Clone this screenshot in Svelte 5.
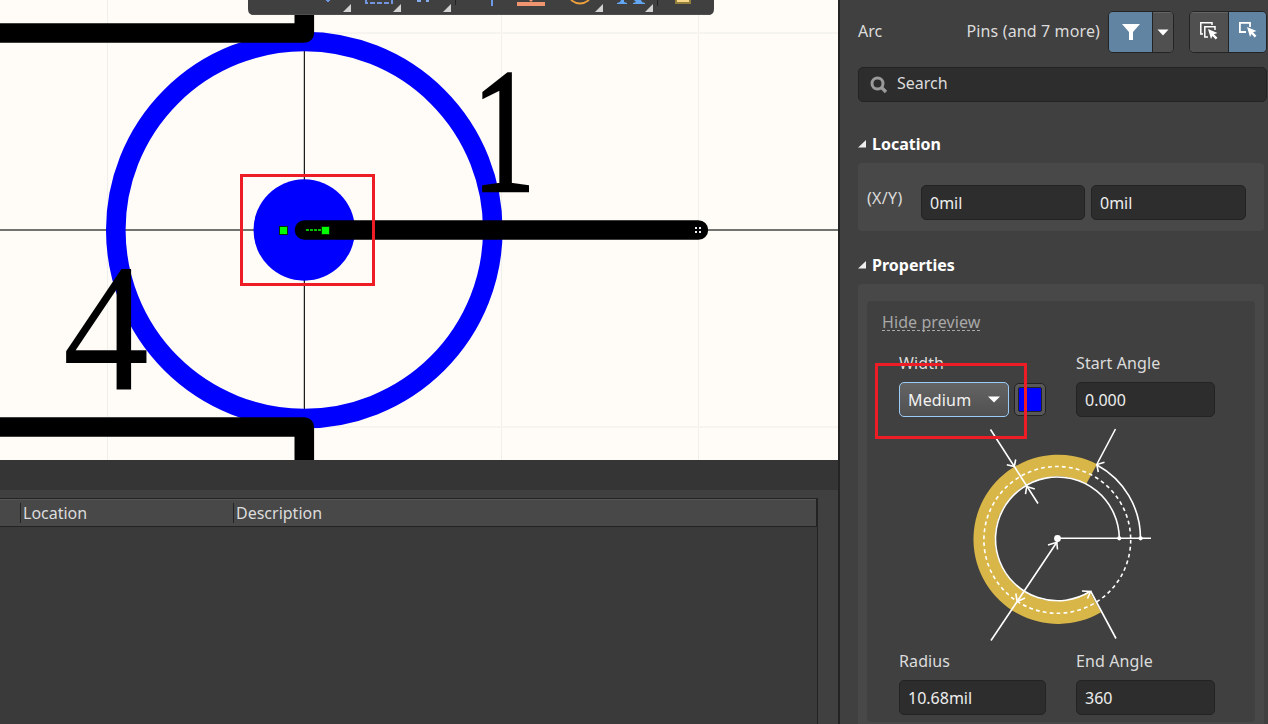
<script lang="ts">
	let search = $state('Search');
	let posX = $state('0mil');
	let posY = $state('0mil');
	let startAngle = $state('0.000');
	let endAngle = $state('360');
	let radius = $state('10.68mil');
	let showPreview = $state(true);

	const gridX = [107.5, 304.5, 501.5, 698.5];
	const gridY = [33, 230, 427];
	const menuMarks = [103, 153, 203, 355, 405];
</script>

<div class="app">
	<div class="left">
		<svg class="sheet" width="838" height="460" viewBox="0 0 838 460">
			{#each gridX as x}
				<path d="M{x} 0V460" stroke="#efefeb" />
			{/each}
			{#each gridY as y}
				<path d="M0 {y}H838" stroke="#f5f4ef" stroke-width="2" />
			{/each}
			<path d="M0 230H838" stroke="#73736f" stroke-width="2" />
			<path d="M304.5 0V460" stroke="#1c1c1c" />
			<path d="M303.5 0V460" stroke="#c8c8c3" />
			<circle cx="304.3" cy="230" r="188.5" fill="none" stroke="#00f" stroke-width="19.6" />
			<circle cx="304.2" cy="230" r="50.7" fill="#00f" />
			<path d="M-20 33H304.3V-20M-20 427H304.3V480" class="body-line" />
			<path d="M304.5 230H698.4" class="body-line" />
			<text class="pin-one" transform="translate(471.8 191) scale(.72 1)">1</text>
			<text transform="translate(62.7 389) scale(.95 1)">4</text>
			<g fill="#e8eef0">
				<path d="M695 227h2v2h-2zM699 227h2v2h-2zM695 231h2v2h-2zM699 231h2v2h-2z" />
			</g>
			<path d="M306 230H321" stroke="#00c000" stroke-width="2" stroke-dasharray="3 1" />
			<rect x="279.5" y="226.5" width="8" height="8" fill="#0f0" stroke="#003200" />
			<rect x="321.5" y="226.5" width="8" height="8" fill="#0f0" stroke="#003200" />
		</svg>

		<svg class="toolbar" width="466" height="15" viewBox="0 0 466 15">
			<path d="M0 0H466V9Q466 15 460 15H6Q0 15 0 9Z" fill="#404040" />
			<path d="M4 14.5H462" stroke="#4e4e4e" />
			<path d="M78 0h4v1h-1v1h-2v-1h-1z" fill="#6f94e0" />
			<path d="M118 0V3H144V0" fill="none" stroke="#7394df" stroke-width="2" stroke-dasharray="5 2" />
			<path d="M169 0h4v2h-4zM178 0h3v2h-3z" fill="#86aced" />
			<path d="M207.5 0V5M409.5 0V6" stroke="#222" />
			<path d="M244 0V6" stroke="#6f9ae8" stroke-width="2" />
			<path d="M269 4H297" stroke="#f0946f" stroke-width="4" />
			<path d="M281 0H285L283 2Z" fill="#f0946f" />
			<path d="M323 0Q332 7 341 0" fill="none" stroke="#eda03c" stroke-width="1.8" />
			<path d="M373 0h3v2l3 1v1h-10v-1l3-1zM386 0h7l1 2 3 1v1h-12v-1l3-1z" fill="#61a5f3" />
			<path d="M427 0h16v4h-16z" fill="#94803c" />
			<path d="M429 0h12v2h-12z" fill="#f8d987" />
			{#each menuMarks as x}
				<path d="M{x - 8} 12L{x} 4V12Z" fill="#d2d2d2" />
			{/each}
		</svg>

		<div class="strip"></div>
		<div class="list">
			<div class="list-head">
				<div class="col col-empty"></div>
				<div class="col col-location">Location</div>
				<div class="col">Description</div>
			</div>
			<div class="list-body"></div>
		</div>
		<div class="marker marker-sheet"></div>
	</div>

	<div class="panel">
		<div class="top">
			<span class="kind">Arc</span>
			<span class="filter-text">Pins (and 7 more)</span>
			<div class="group">
				<button class="btn btn-filter on" aria-label="Filter">
					<svg width="20" height="18" viewBox="0 0 20 18"><path d="M1 1H19L12 9V17H8V9Z" fill="#fff" /></svg>
				</button>
				<button class="btn btn-drop" aria-label="Filter list">
					<svg width="12" height="7" viewBox="0 0 12 7"><path d="M.5 .5H11.5L6 6.5Z" fill="#fff" /></svg>
				</button>
			</div>
			<div class="group group-select">
				<button class="btn btn-multi" aria-label="Select all">
					<svg width="20" height="20" viewBox="0 0 20 20">
						<path d="M4 13H1.8V1.8H13V4" fill="none" stroke="#fff" stroke-width="1.5" />
						<path d="M9 16H5.8V5.8H16V9" fill="none" stroke="#fff" stroke-width="1.5" />
						<path d="M9 8L18.5 12L15 13.3L18.5 16.8L16.7 18.5L13.5 15L12 18Z" fill="#fff" />
					</svg>
				</button>
				<button class="btn btn-single on" aria-label="Select one">
					<svg width="20" height="20" viewBox="0 0 20 20">
						<path d="M8 12H1.9V2.9H12V7" fill="none" stroke="#fff" stroke-width="1.8" />
						<path d="M9 7L18.5 11L15 12.3L18.5 15.8L16.7 17.5L13.5 14L12 17Z" fill="#fff" />
					</svg>
				</button>
			</div>
		</div>

		<div class="search">
			<svg width="18" height="18" viewBox="0 0 18 18">
				<circle cx="7.5" cy="7.5" r="5.5" fill="none" stroke="#9a9a9a" stroke-width="3" />
				<path d="M11.5 11.5L16 16" stroke="#9a9a9a" stroke-width="3.4" />
			</svg>
			<input bind:value={search} />
		</div>

		<div class="section">
			<svg width="8" height="8" viewBox="0 0 8 8"><path d="M0 7.5L8 0V7.5Z" fill="#eee" /></svg>
			<span>Location</span>
		</div>
		<div class="box location">
			<span class="xy">(X/Y)</span>
			<input class="field field-x" bind:value={posX} />
			<input class="field field-y" bind:value={posY} />
		</div>

		<div class="section section-props">
			<svg width="8" height="8" viewBox="0 0 8 8"><path d="M0 7.5L8 0V7.5Z" fill="#eee" /></svg>
			<span>Properties</span>
		</div>
		<div class="box props">
			<div class="inner">
				<button class="preview-link" onclick={() => (showPreview = !showPreview)}>Hide preview</button>
				<div class="grid">
					<div>
						<div class="label">Width</div>
						<div class="width-row">
							<button class="select">
								<span>Medium</span>
								<svg width="12" height="7" viewBox="0 0 12 7"><path d="M0 .5H12L6 6.5Z" fill="#fff" /></svg>
							</button>
							<button class="color" aria-label="Color"><span></span></button>
						</div>
					</div>
					<div>
						<div class="label">Start Angle</div>
						<input class="field" bind:value={startAngle} />
					</div>
				</div>
				<div class="preview">
					{#if showPreview}
						<svg width="210" height="230" viewBox="960 420 210 230" fill="none" stroke="#fff" stroke-width="1.6">
							<path d="M1097 464.2A84.6 84.6 0 1 0 1101 612.2L1089.8 592A62.4 62.4 0 1 1 1086.5 483.6Z" fill="#d9b648" stroke="none" />
							<circle cx="1057.3" cy="539.9" r="73.4" stroke-dasharray="3.8 3.2" />
							<path d="M1119.3 538.3A61.9 61.9 0 1 0 1090 591.5" />
							<path d="M1140.5 538.3A83.5 83.5 0 0 0 1097 465" />
							<path d="M1057.5 538.3H1151" />
							<path d="M990.5 429.5L1038 503.5M1115.5 429L1097 464M991 640.5L1057 542M1116 638.5L1090.5 591" />
							<path d="M1006.8 464.8L1014.3 466.5L1015.7 459.5" />
							<path d="M1025.5 494.2L1026.7 486.5L1034.8 489" />
							<path d="M1098.3 472L1096.8 464.5L1104.5 462.3" />
							<path d="M1048 545L1056.8 542.3L1057.5 549.5" />
							<path d="M1015.8 593.5L1017.2 601.5L1025 598" />
							<path d="M1082 591L1090.5 591.5L1087.5 598.5" />
							<circle cx="1057.5" cy="538.5" r="3.4" fill="#fff" stroke="none" />
							<circle cx="1119.3" cy="538.3" r="2.1" fill="#fff" stroke="none" />
							<circle cx="1140.6" cy="538.3" r="2.1" fill="#fff" stroke="none" />
						</svg>
					{/if}
				</div>
				<div class="grid grid-end">
					<div>
						<div class="label">Radius</div>
						<input class="field" bind:value={radius} />
					</div>
					<div>
						<div class="label">End Angle</div>
						<input class="field" bind:value={endAngle} />
					</div>
				</div>
			</div>
		</div>
		<div class="marker marker-width"></div>
	</div>
</div>

<style>
	:global(body) {
		overflow: hidden;
		background: #404040;
	}
	.app {
		display: flex;
		width: 1268px;
		height: 724px;
		overflow: hidden;
		font-family: "Noto Sans", "Open Sans", sans-serif;
		font-size: 16px;
		line-height: 22px;
		color: #dcdcdc;
	}
	input,
	button {
		font: inherit;
		color: inherit;
		box-sizing: border-box;
		margin: 0;
		padding: 0;
		outline: none;
	}
	svg {
		display: block;
		flex: none;
	}
	.left {
		position: relative;
		display: flex;
		flex-direction: column;
		width: 838px;
		height: 724px;
		flex: none;
	}
	.sheet {
		background: #fffcf7;
	}
	.sheet text {
		font-family: "Liberation Serif", serif;
		font-size: 182px;
		fill: #000;
	}
	.sheet .pin-one {
		font-size: 178px;
		stroke: #000;
		stroke-width: 2.5px;
	}
	.body-line {
		fill: none;
		stroke: #000;
		stroke-width: 19.6;
		stroke-linecap: round;
		stroke-linejoin: round;
	}
	.toolbar {
		position: absolute;
		left: 248px;
		top: 0;
	}
	.strip {
		height: 30px;
		background: #353535;
	}
	.list {
		flex: 1;
		display: flex;
		flex-direction: column;
		width: 818px;
		padding-top: 8px;
		box-sizing: border-box;
	}
	.list-head {
		display: flex;
		align-items: center;
		height: 29px;
		box-sizing: border-box;
		border: 1px solid #232323;
		border-left: none;
		border-right-width: 2px;
		background: #484848;
		box-shadow: inset 0 1px #555;
	}
	.col {
		height: 20px;
		line-height: 20px;
		padding-left: 2px;
		font-size: 16px;
	}
	.col + .col {
		border-left: 1px solid #232323;
	}
	.col-empty {
		width: 18px;
	}
	.col-location {
		width: 210px;
	}
	.list-body {
		flex: 1;
		background: #3a3a3a;
		border-right: 1px solid #232323;
	}
	.marker {
		position: absolute;
		box-sizing: border-box;
		border: 3px solid #ee1c25;
		pointer-events: none;
	}
	.marker-sheet {
		left: 240px;
		top: 174px;
		width: 135px;
		height: 112px;
	}
	.marker-width {
		left: 35px;
		top: 363px;
		width: 152px;
		height: 76px;
	}
	.panel {
		position: relative;
		flex: 1;
		min-width: 0;
		box-sizing: border-box;
		height: 724px;
		border-left: 2px solid #232323;
		padding: 11px 0 0 18px;
	}
	.top {
		display: flex;
		align-items: center;
		height: 42px;
	}
	.kind,
	.filter-text {
		padding-bottom: 2px;
	}
	.filter-text {
		margin-left: auto;
		margin-right: 8px;
		letter-spacing: 0.13px;
	}
	.group {
		display: flex;
		flex: none;
		box-sizing: border-box;
		width: 66px;
		height: 42px;
		border: 1px solid #232323;
		border-radius: 5px;
		background: #505050;
		overflow: hidden;
	}
	.group-select {
		width: 78px;
		margin: 0 1px 0 15px;
	}
	.btn {
		display: flex;
		align-items: center;
		justify-content: center;
		border: none;
		background: #505050;
		box-shadow: inset 0 1px #646464;
	}
	.btn + .btn {
		border-left: 1px solid #232323;
	}
	.on {
		background: #6284a3;
		box-shadow: none;
	}
	.btn-filter {
		width: 43px;
	}
	.btn-drop {
		width: 21px;
	}
	.btn-multi {
		width: 38px;
		padding-bottom: 3px;
	}
	.btn-single {
		width: 38px;
		padding-bottom: 4px;
	}
	.search {
		display: flex;
		align-items: center;
		box-sizing: border-box;
		width: 409px;
		height: 35px;
		margin-top: 14px;
		padding-left: 11px;
		border: 1px solid #232323;
		border-radius: 5px;
		background: #2d2d2d;
	}
	.search input {
		width: 300px;
		margin: 0 0 3px 9px;
		border: none;
		background: none;
	}
	.section {
		display: flex;
		align-items: center;
		gap: 6px;
		height: 22px;
		margin-top: 31px;
		font-weight: bold;
		color: #fff;
	}
	.box {
		box-sizing: border-box;
		width: 406px;
		border-radius: 4px;
		background: #484848;
	}
	.location {
		display: flex;
		height: 68px;
		margin-top: 8px;
		padding: 22px 0 0 9px;
	}
	.xy {
		width: 54px;
		margin-top: 2px;
		letter-spacing: 0.3px;
	}
	.field {
		display: block;
		width: 139px;
		height: 35px;
		padding: 0 8px;
		border: 1px solid #232323;
		border-radius: 5px;
		background: #2d2d2d;
		color: #eee;
	}
	.field-x {
		width: 164px;
	}
	.field-y {
		width: 155px;
		margin-left: 6px;
	}
	.section-props {
		margin-top: 23px;
	}
	.props {
		height: 460px;
		margin-top: 8px;
		padding: 17px 9px;
	}
	.inner {
		display: flex;
		flex-direction: column;
		align-items: flex-start;
		box-sizing: border-box;
		width: 388px;
		height: 421px;
		padding: 12px 0 0 15px;
		border-radius: 4px;
		background: #404040;
	}
	.preview-link {
		height: 18px;
		line-height: 18px;
		border: none;
		border-bottom: 1px dashed #a8a8a8;
		background: none;
		color: #a8a8a8;
		letter-spacing: 0.08px;
	}
	.grid {
		display: grid;
		grid-template-columns: 147px 139px;
		column-gap: 30px;
		margin: 21px 0 0 17px;
	}
	.label {
		margin-bottom: 8px;
		letter-spacing: 0.1px;
	}
	.width-row {
		display: flex;
		align-items: center;
		gap: 5px;
	}
	.select {
		display: flex;
		align-items: center;
		justify-content: space-between;
		width: 110px;
		height: 35px;
		padding: 0 8px;
		border: 1px solid #9bcbf7;
		border-radius: 5px;
		background: linear-gradient(#646464, #505050);
		color: #f2f2f2;
		letter-spacing: 0.15px;
	}
	.color {
		width: 32px;
		height: 33px;
		padding: 3px;
		border: 1px solid #232323;
		border-radius: 5px;
		background: #585858;
	}
	.color span {
		display: block;
		box-sizing: border-box;
		height: 25px;
		border: 1px solid #232323;
		border-radius: 2px;
		background: #00f;
	}
	.preview {
		height: 230px;
		margin: 3px 0 0 78px;
	}
	.grid-end {
		margin-top: 0;
	}
	.grid-end .field {
		width: 100%;
	}
</style>
